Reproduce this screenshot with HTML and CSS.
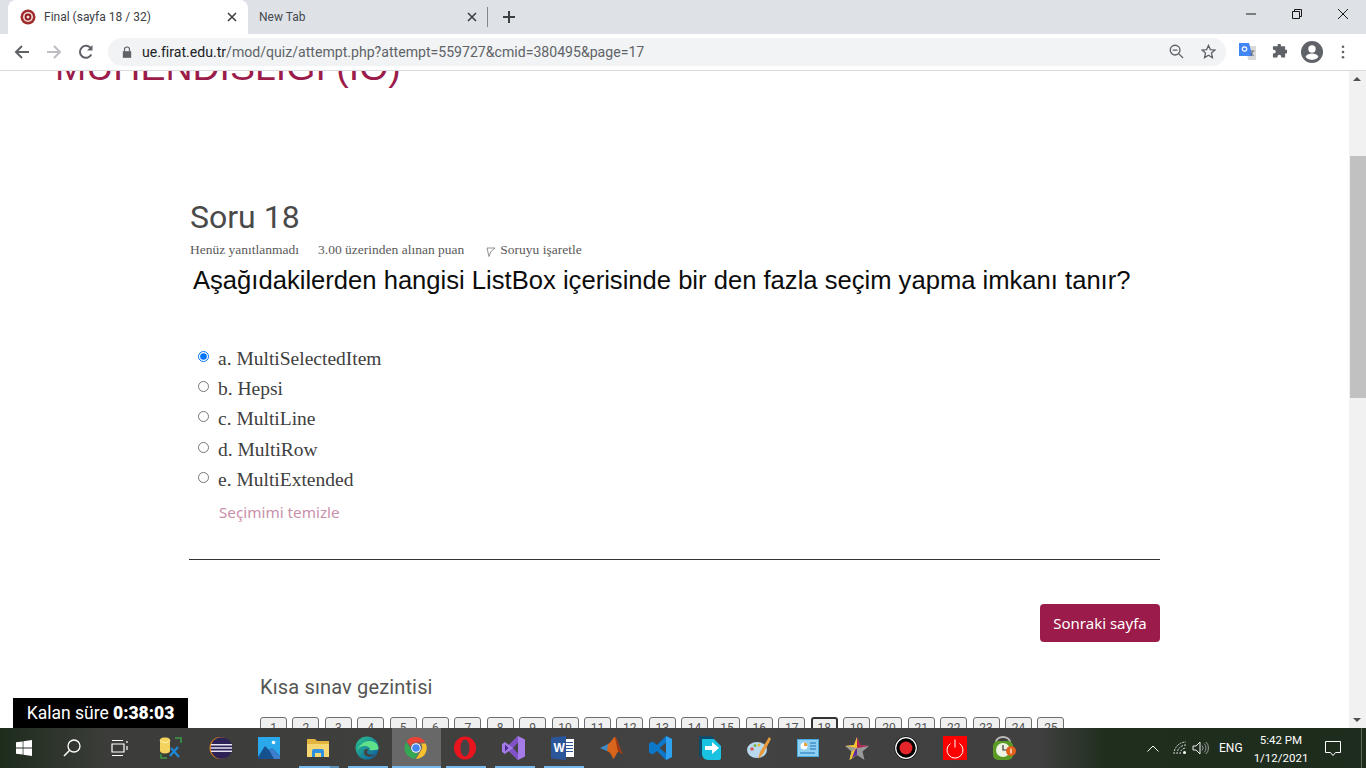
FILE: index.html
```html
<!DOCTYPE html>
<html lang="tr">
<head>
<meta charset="utf-8">
<title>Final (sayfa 18 / 32)</title>
<link rel="stylesheet" href="styles.css">
</head>
<body>
<header class="chrome">
  <div class="tabstrip">
    <div class="tab tab-active">
      <svg class="favicon" viewBox="0 0 16 16"><circle cx="8" cy="8" r="7.500" fill="#a02c2c"/><circle cx="8" cy="8" r="5" fill="#f3dcdc"/><circle cx="8" cy="8" r="3.400" fill="#8e1d1d"/><circle cx="8" cy="8" r="1.500" fill="#f3dcdc"/></svg>
      <span class="tab-title">Final (sayfa 18 / 32)</span>
      <svg class="tab-close" viewBox="0 0 10 10"><path d="M1 1l8 8M9 1l-8 8"/></svg>
    </div>
    <div class="tab tab-idle">
      <span class="tab-title">New Tab</span>
      <svg class="tab-close" viewBox="0 0 10 10"><path d="M1 1l8 8M9 1l-8 8"/></svg>
    </div>
    <span class="tab-sep"></span>
    <svg class="new-tab" viewBox="0 0 12 12"><path d="M6 0v12M0 6h12"/></svg>
    <div class="win-controls">
      <svg viewBox="0 0 10 10" class="win-min"><path d="M0 5h10"/></svg>
      <svg viewBox="0 0 10 10" class="win-max"><path d="M.5 2.500h7v7h-7zM2.500 2.500V.5h7v7h-2"/></svg>
      <svg viewBox="0 0 10 10" class="win-close"><path d="M0 0l10 10M10 0L0 10"/></svg>
    </div>
  </div>
  <div class="toolbar">
    <svg class="nav-icon" viewBox="0 0 16 16"><path class="ico-line" d="M15 8H2M8 2L2 8l6 6"/></svg>
    <svg class="nav-icon nav-fwd" viewBox="0 0 16 16"><path class="ico-line ico-dim" d="M1 8h13M8 2l6 6-6 6"/></svg>
    <svg class="nav-icon nav-reload" viewBox="0 0 16 16"><path class="ico-line" d="M13.300 10.500A6 6 0 1 1 13 4.600"/><path class="ico-fill" d="M14.500 1v5.500H9z"/></svg>
    <div class="omnibox">
      <svg class="lock" viewBox="0 0 12 14"><path class="ico-fill" d="M1 6h10v8H1z"/><path class="ico-line-thin" d="M3 6V4a3 3 0 0 1 6 0v2"/></svg>
      <span class="url"><span class="url-host">ue.firat.edu.tr</span>/mod/quiz/attempt.php?attempt=559727&amp;cmid=380495&amp;page=17</span>
      <svg class="omni-icon" viewBox="0 0 16 16"><circle class="ico-line-thin" cx="6.500" cy="6.500" r="5.200"/><path class="ico-line-thin" d="M4 6.500h5M10.500 10.500l4.500 4.500"/></svg>
      <svg class="omni-icon omni-star" viewBox="0 0 16 16"><path class="ico-line-thin" d="M8 1.500l2 4.500 4.800.5-3.600 3.200 1 4.800L8 12l-4.200 2.500 1-4.800L1.200 6.500 6 6z"/></svg>
    </div>
    <svg class="ext-translate" viewBox="0 0 17 17"><path fill="#dadada" d="M7 3h10v14H9z"/><path fill="#4285f4" d="M0 0h10l3.500 13H0z"/><circle cx="5.500" cy="6" r="2.200" fill="none" stroke="#fff" stroke-width="1.200"/><path d="M11.500 8h4M13.500 8c0 2-1 4-2 5M12 9.500c.5 1.500 2 3 3 3.500" fill="none" stroke="#666" stroke-width=".9"/></svg>
    <svg class="ext-puzzle" viewBox="0 0 16 16"><path class="ico-fill" d="M6 1a1.800 1.800 0 0 1 3.500 0v1.500H14V6h1a2 2 0 0 1 0 4h-1v4.500H9.800v-1a2 2 0 0 0-4 0v1H1V10h1a2 2 0 0 0 0-4H1V2.500h5z"/></svg>
    <svg class="avatar" viewBox="0 0 22 22"><circle cx="11" cy="11" r="11" fill="#5f6368"/><circle cx="11" cy="8" r="3.700" fill="#fff"/><path fill="#fff" d="M4.500 16c1-2.700 4-3.500 6.500-3.500s5.500.8 6.500 3.500a8.500 8.500 0 0 1-13 0z"/></svg>
    <svg class="kebab" viewBox="0 0 4 16"><circle cx="2" cy="2" r="1.500"/><circle cx="2" cy="8" r="1.500"/><circle cx="2" cy="14" r="1.500"/></svg>
  </div>
</header>

<main class="viewport">
  <div class="page">
    <div class="page-inner">
      <h1 class="course">MÜHENDİSLİĞİ (İÖ)</h1>
      <section class="question">
        <h2 class="q-number">Soru 18</h2>
        <div class="q-meta">
          <span>Henüz yanıtlanmadı</span>
          <span>3.00 üzerinden alınan puan</span>
          <span class="q-flag"><svg viewBox="0 0 10 10"><path d="M1 1h8L5 4.500 3 9.500z" fill="#fff" stroke="#777" stroke-width=".8"/></svg>Soruyu işaretle</span>
        </div>
        <p class="q-text">Aşağıdakilerden hangisi ListBox içerisinde bir den fazla seçim yapma imkanı tanır?</p>
        <div class="answers">
          <label class="answer"><input type="radio" name="q" checked><span>a. MultiSelectedItem</span></label>
          <label class="answer"><input type="radio" name="q"><span>b. Hepsi</span></label>
          <label class="answer"><input type="radio" name="q"><span>c. MultiLine</span></label>
          <label class="answer"><input type="radio" name="q"><span>d. MultiRow</span></label>
          <label class="answer"><input type="radio" name="q"><span>e. MultiExtended</span></label>
        </div>
        <a class="clear-choice">Seçimimi temizle</a>
        <hr class="rule">
        <div class="actions"><button class="next-btn">Sonraki sayfa</button></div>
      </section>
      <section class="quiz-nav">
        <h3 class="nav-title">Kısa sınav gezintisi</h3>
        <div class="nav-grid">
          <span class="qn">1</span><span class="qn">2</span><span class="qn">3</span><span class="qn">4</span><span class="qn">5</span><span class="qn">6</span><span class="qn">7</span><span class="qn">8</span><span class="qn">9</span><span class="qn">10</span><span class="qn">11</span><span class="qn">12</span><span class="qn">13</span><span class="qn">14</span><span class="qn">15</span><span class="qn">16</span><span class="qn">17</span><span class="qn qn-current">18</span><span class="qn">19</span><span class="qn">20</span><span class="qn">21</span><span class="qn">22</span><span class="qn">23</span><span class="qn">24</span><span class="qn">25</span>
        </div>
      </section>
    </div>
    <div class="timer">Kalan süre <b>0:38:03</b></div>
  </div>
  <div class="scrollbar">
    <span class="sb-arrow sb-up"></span>
    <span class="sb-thumb"></span>
    <span class="sb-arrow sb-down"></span>
  </div>
</main>

<footer class="taskbar">
  <div class="task-slot sys"><svg class="ti-win" viewBox="0 0 16 16"><path fill="#fff" d="M0 2.300l6.700-.9v6.200H0zM7.400 1.300L16 0v7.600H7.400zM0 8.400h6.700v6.200L0 13.700zM7.400 8.400H16V16l-8.600-1.200z"/></svg></div>
  <div class="task-slot sys"><svg class="ti-20" viewBox="0 0 20 20"><circle cx="12" cy="8" r="6" fill="none" stroke="#fff" stroke-width="1.300"/><path d="M7.700 12.300L2 18" stroke="#fff" stroke-width="1.500"/></svg></div>
  <div class="task-slot sys sys-last"><svg class="ti-20" viewBox="0 0 20 20"><path d="M2 2.500h11M2 17.500h11M2 6h12v8H2zM17 3v2M17 8v4" fill="none" stroke="#fff" stroke-width="1.200"/></svg></div>
  <div class="task-slot"><svg class="ti-24" viewBox="0 0 24 24"><path d="M6 1.500C2 1.500 1 3 1 4v11c0 1 2 2.500 5 2.500s5-1.500 5-2.500V4c0-1-1-2.500-5-2.500z" fill="#f4d35e"/><path d="M1 4c0 1 2 2.500 5 2.500S11 5 11 4" fill="none" stroke="#fff3b0"/><path d="M16 2h6v5M2 18v4h6" fill="none" stroke="#3b9b45" stroke-width="1.500"/><path d="M11 20l8-9M12 12l8 9" stroke="#1e88d8" stroke-width="2.200"/></svg></div>
  <div class="task-slot"><svg class="ti-24" viewBox="0 0 24 24"><circle cx="12.500" cy="12" r="11" fill="#e8861e"/><circle cx="13.500" cy="12" r="10.800" fill="#2c2255"/><path d="M3 8.800h21M2.700 12h21.600M3 15.200h21" stroke="#e8e4f5" stroke-width="1.500"/></svg></div>
  <div class="task-slot"><svg class="ti-22" viewBox="0 0 22 22"><rect width="22" height="22" fill="#29a9ec"/><circle cx="15.500" cy="5.500" r="1.800" fill="#fff"/><path d="M0 20l7-11 4 4 3-2 8 8v3H0z" fill="#15508f"/><path d="M11 13l3-2 8 8v3h-6z" fill="#3c7ecb"/></svg></div>
  <div class="task-slot running running-multi"><svg class="ti-22" viewBox="0 0 22 22"><path d="M0 2h8l2 2h12v16H0z" fill="#e3b53e"/><path d="M0 7h22v13H0z" fill="#f7d774"/><path d="M5 20v-6a2 2 0 0 1 2-2h8a2 2 0 0 1 2 2v6h-3v-4H8v4z" fill="#2f8fe0"/></svg></div>
  <div class="task-slot running"><svg class="ti-24" viewBox="0 0 24 24"><defs><linearGradient id="eg" x1="0" y1="0" x2="1" y2="1"><stop offset="0" stop-color="#2bc48a"/><stop offset="1" stop-color="#0c59a4"/></linearGradient></defs><circle cx="12" cy="12" r="11.500" fill="url(#eg)"/><path d="M23.500 13c0-6-5-8-9-8-6 0-11 5-13 10 0 0 3-6 9-5 4 .7 5 3 4 4 6 1 9-1 9-1z" fill="#5fe08a"/><path d="M12 13c-3 0-4 3-2 6 1.500 2 6 3 11-1-4 1.500-9 .5-9-2 0-1 1-2 2-2z" fill="#444"/></svg></div>
  <div class="task-slot running task-active"><svg class="ti-24" viewBox="0 0 24 24"><path d="M12 1a11 11 0 0 1 9.500 5.500H12a5.500 5.500 0 0 0-5.300 4L2.800 5A11 11 0 0 1 12 1z" fill="#ea4335"/><path d="M21.800 7.500A11 11 0 0 1 12 23l4.700-8a5.500 5.500 0 0 0 .2-7.500z" fill="#fbc02d"/><path d="M2.200 6a11 11 0 0 0 8.600 16.900l3.900-6.500a5.500 5.500 0 0 1-7.400-2.300z" fill="#34a853"/><circle cx="12" cy="12" r="4.800" fill="#fff"/><circle cx="12" cy="12" r="3.800" fill="#4285f4"/></svg></div>
  <div class="task-slot running"><svg class="ti-24" viewBox="0 0 24 24"><ellipse cx="12" cy="12" rx="11" ry="11.500" fill="#e8151f"/><ellipse cx="12" cy="12" rx="4.500" ry="8.500" fill="#444"/></svg></div>
  <div class="task-slot running"><svg class="ti-24" viewBox="0 0 24 24"><path d="M16 0l7 3.500v17L16 24l-9-9-4 3-3-2V8l3-2 4 3z" fill="#a57be8"/><path d="M16 0v24l-9-9 4-3-4-3z" fill="#8052c9"/><path d="M3 8.500v7l3.500-3.500z" fill="#4a2a8f"/><path d="M16 6.500L11 12l5 5.500z" fill="#444"/></svg></div>
  <div class="task-slot running"><svg class="ti-24" viewBox="0 0 24 24"><path d="M14 3h9v18h-9z" fill="#fff"/><path d="M15 6.500h7M15 9.500h7M15 12.500h7M15 15.500h7" stroke="#2b579a" stroke-width="1.200"/><path d="M0 1.500L15 0v24L0 22.500z" fill="#2b579a"/><text x="2.500" y="16" class="word-w">W</text></svg></div>
  <div class="task-slot"><svg class="ti-24" viewBox="0 0 24 24"><path d="M0 12l8-4 3 4-4 3z" fill="#3f8dc8"/><path d="M8 8c3-1 5-7 7-7 2 0 5 14 8 17-3-1-4-3-5-2-2 2-3 6-5 7-1-4-3-7-6-8z" fill="#d9641c"/><path d="M15 1c2 0 5 14 8 17-3-1-4-3-5-2z" fill="#a03613"/></svg></div>
  <div class="task-slot"><svg class="ti-24" viewBox="0 0 24 24"><path d="M17 0l6 3v18l-6 3-9-9-4.500 3.500L0 16.500V7.500L3.500 5.500 8 9z" fill="#0b78c9"/><path d="M17 0l6 3v18l-6 3z" fill="#2ea1ef"/><path d="M17 6.500L10.500 12l6.500 5.500z" fill="#444"/></svg></div>
  <div class="task-slot"><svg class="ti-24" viewBox="0 0 24 24"><path d="M1 0h13l2 3H4v18H1z" fill="#124a6b"/><path d="M4 3h12l7 7v12a2 2 0 0 1-2 2H10a6 6 0 0 1-6-6z" fill="#19c2e0"/><path d="M7 10h7V6l7 6-7 6v-4H7z" fill="#fff"/></svg></div>
  <div class="task-slot"><svg class="ti-24" viewBox="0 0 24 24"><ellipse cx="10" cy="14" rx="10" ry="8" fill="#b8d8ee"/><circle cx="5" cy="13" r="1.700" fill="#d9534f"/><circle cx="8" cy="9.500" r="1.500" fill="#7ab648"/><circle cx="12" cy="9" r="1.500" fill="#e8b83a"/><path d="M22 1l-9 15-2 7 5-5 8-15z" fill="#e89a3c"/></svg></div>
  <div class="task-slot"><svg class="ti-22" viewBox="0 0 22 18"><rect width="22" height="18" fill="#4aa9e0"/><rect x="1" y="1" width="20" height="16" fill="#8fd0f2"/><circle cx="7" cy="7" r="3.500" fill="#fff"/><path d="M7 7V3.500A3.500 3.500 0 0 1 10.500 7z" fill="#e8a33a"/><path d="M13 4h6M13 7h6M13 10h6M3 14h15" stroke="#1b6fb3" stroke-width="1.200"/></svg></div>
  <div class="task-slot"><svg class="ti-24" viewBox="0 0 24 24"><path d="M12 1l3 8 9 1-6.500 5.500 2 8.500-7.500-5-7.500 5 2-8.500L0 10l9-1z" fill="#999"/><path d="M12 1v11L0 10l9-1z" fill="#f4c430"/><path d="M12 1l3 8 9 1-12 2z" fill="#b5234d"/><path d="M12 12v7l-7.500 5 2-8.500z" fill="#f4c430"/><path d="M12 12v7l-5 3 3-8z" fill="#5b2ea0"/></svg></div>
  <div class="task-slot"><svg class="ti-24" viewBox="0 0 24 24"><circle cx="12" cy="12" r="11.500" fill="#000"/><circle cx="12" cy="12" r="10.300" fill="none" stroke="#fff" stroke-width="1.200"/><circle cx="12" cy="12" r="6.500" fill="#e5252a"/></svg></div>
  <div class="task-slot"><svg class="ti-24" viewBox="0 0 24 24"><rect width="24" height="24" fill="#fe0000"/><path d="M7.500 7.500a8 8 0 1 0 9 0M12 3.500v8" fill="none" stroke="#fff" stroke-width="1"/></svg></div>
  <div class="task-slot"><svg class="ti-24" viewBox="0 0 24 24"><path d="M4 6a7 5 0 0 1 14 0" fill="none" stroke="#bbb" stroke-width="2"/><rect x="1" y="5" width="20" height="19" rx="5" fill="#5a9a25"/><circle cx="11" cy="14" r="7" fill="#eef4e4"/><path d="M11 9v5h4" fill="none" stroke="#333" stroke-width="1.200"/><circle cx="19" cy="15" r="5" fill="#e2601c"/><path d="M19 12.500v5" stroke="#fff" stroke-width="1.200"/></svg></div>
  <div class="tray">
    <svg class="tray-chev" viewBox="0 0 12 7"><path d="M.5 6.500L6 1l5.500 5.500"/></svg>
    <svg class="tray-wifi" viewBox="0 0 14 14"><path d="M1 13A12 12 0 0 1 13 1M4 13a9 9 0 0 1 9-9M7 13a6 6 0 0 1 6-6" fill="none" stroke="#ddd" stroke-width="1" stroke-dasharray="2 1"/><circle cx="11.500" cy="11.500" r="1.500" fill="#fff"/></svg>
    <svg class="tray-vol" viewBox="0 0 17 14"><path d="M1 5h3l4-4v12l-4-4H1z" fill="none" stroke="#eee"/><path d="M10 4.500a3.500 3.500 0 0 1 0 5M12 2.500a6 6 0 0 1 0 9M14 1a8.500 8.500 0 0 1 0 12" fill="none" stroke="#999"/></svg>
    <span class="tray-lang">ENG</span>
    <div class="tray-clock"><span>5:42 PM</span><span>1/12/2021</span></div>
    <svg class="tray-note" viewBox="0 0 16 15"><path d="M.5.500h15v11h-5L8 14.500l-2.500-3h-5z"/></svg>
    <span class="show-desktop"></span>
  </div>
</footer>
</body>
</html>
```
FILE: styles.css
```css
* { box-sizing: border-box; }
html, body { margin: 0; height: 100%; }
body {
  width: 1366px; height: 768px; overflow: hidden;
  display: flex; flex-direction: column;
  font-family: "Roboto", sans-serif; background: #fff;
}
/* browser chrome */
.chrome { flex: 0 0 71px; }
.tabstrip {
  height: 34px; background: #dee1e6; display: flex; align-items: flex-end;
  padding-left: 8px;
}
.tab {
  width: 240px; height: 34px; display: flex; align-items: center;
  font: 12px "Roboto", sans-serif; color: #3c4043;
}
.tab-active { background: #fff; border-radius: 8px 8px 0 0; padding: 0 11px 0 12px; }
.tab-idle { width: 239px; padding: 0 10px 0 11px; color: #45494e; }
.favicon { width: 16px; height: 16px; flex: none; margin-right: 8px; }
.tab-title { flex: 1; white-space: nowrap; }
.tab-close { width: 10px; height: 10px; flex: none; }
.tab-close path { stroke: #3c4043; stroke-width: 1.600; fill: none; }
.tab-sep { width: 1px; height: 20px; background: #80868b; margin: 0 0 7px 0; }
.new-tab { width: 12px; height: 12px; margin: 0 0 11px 15px; }
.new-tab path { stroke: #3c4043; stroke-width: 2; fill: none; }
.win-controls { margin-left: auto; height: 34px; display: flex; align-items: center; gap: 36px; padding: 0 18px 6px 0; }
.win-controls svg { width: 10px; height: 10px; }
.win-controls path { stroke: #1a1a1a; stroke-width: 1; fill: none; }
.toolbar {
  height: 37px; background: #fff; border-bottom: 1px solid #d8dadd;
  display: flex; align-items: center; padding: 0 0 1px 14px;
}
.nav-icon { width: 16px; height: 16px; flex: none; margin-right: 16px; }
.nav-reload { margin-right: 14px; }
.ico-line { stroke: #5f6368; stroke-width: 2; fill: none; }
.ico-line-thin { stroke: #5f6368; stroke-width: 1.400; fill: none; }
.ico-dim { stroke: #bcbec1; }
.ico-fill { fill: #5f6368; }
.omnibox {
  width: 1118px; height: 28px; border-radius: 14px; background: #f1f3f4;
  display: flex; align-items: center; padding: 0 10px 0 14px;
}
.lock { width: 10px; height: 12px; flex: none; margin-right: 10px; }
.url { flex: 1; font: 14.100px "Roboto", sans-serif; color: #5f6368; white-space: nowrap; }
.url-host { color: #202124; }
.omni-icon { width: 15px; height: 15px; flex: none; margin-left: 17px; }
.ext-translate { width: 17px; height: 17px; flex: none; margin-left: 13px; }
.ext-puzzle { width: 15px; height: 15px; flex: none; margin-left: 16px; }
.avatar { width: 22px; height: 22px; flex: none; margin-left: 14px; }
.kebab { width: 4px; height: 14px; flex: none; margin-left: 18px; fill: #5f6368; }

/* page */
.viewport { flex: 1; min-height: 0; display: flex; }
.page { flex: 1; position: relative; overflow: hidden; }
.page-inner { margin-top: -24px; }
.course {
  margin: 0; padding-left: 55px; height: 40px;
  font: 400 37.500px/40px "Liberation Sans", sans-serif; color: #9b1c4a; white-space: nowrap;
}
.question { margin: 112px 189px 0 189px; }
.q-number { margin: 0; font: 400 32px/36px "Roboto", sans-serif; color: #4a4a4a; padding-left: 1px; }
.q-meta {
  display: flex; gap: 19px; margin-top: 7px; padding-left: 1px;
  font: 13.500px/16px "Liberation Serif", serif; color: #5a5a5a;
}
.q-flag { display: flex; align-items: center; gap: 4px; margin-left: 3px; }
.q-flag svg { width: 10px; height: 10px; margin-top: 3px; }
.q-text {
  margin: 7px 0 0 4px; font: 25.600px/30px "Liberation Sans", sans-serif; color: #0c0c0c; white-space: nowrap;
}
.answers { margin: 49px 0 0 9px; display: flex; flex-direction: column; }
.answer {
  height: 30.200px; display: flex; align-items: flex-start; gap: 9px;
  font: 19.500px/30px "Liberation Serif", serif; color: #404040;
}
.answer input { width: 11px; height: 11px; margin: 7px 0 0 0; accent-color: #0075ff; flex: none; }
.clear-choice {
  display: block; margin: 5px 0 0 30px; font: 15.250px/24px "Noto Sans", sans-serif; color: #c98fab;
}
.rule { margin: 35px 0 0 0; border: 0; border-top: 1px solid #333; }
.actions { display: flex; justify-content: flex-end; margin-top: 44px; }
.next-btn {
  width: 120px; height: 38px; border: 0; border-radius: 4px; background: #9b1c4a; color: #fff;
  font: 15px "Noto Sans", sans-serif; padding: 0;
}
.quiz-nav { margin: 32px 0 0 260px; }
.nav-title { margin: 0; font: 400 20px/26px "Roboto", sans-serif; color: #555; letter-spacing: .15px; }
.nav-grid { display: flex; gap: 5.400px; margin-top: 17px; }
.qn {
  width: 27px; height: 28px; flex: none; border: 1px solid #6e6e6e; border-radius: 3px;
  background: #f0f0f0; font: 12px/20px "Roboto", sans-serif; color: #555; text-align: center;
}
.qn-current { border: 2px solid #333; line-height: 18px; }
.timer {
  position: absolute; left: 13px; bottom: 0; width: 175px; height: 30px;
  background: #000; color: #fff; font: 17.500px/30px "Roboto", sans-serif; text-align: center;
}
.timer b { font-weight: 900; }
.scrollbar {
  flex: 0 0 17px; position: relative; background: #f1f1f1;
}
.sb-thumb { position: absolute; left: 1px; right: 0; top: 85px; height: 242px; background: #c1c1c1; }
.sb-arrow { position: absolute; left: 4px; border-left: 4px solid transparent; border-right: 4px solid transparent; }
.sb-up { top: 6px; border-bottom: 4px solid #505050; }
.sb-down { bottom: 6px; border-top: 4px solid #505050; }

/* taskbar */
.taskbar {
  flex: 0 0 40px; display: flex; align-items: stretch;
  background: linear-gradient(90deg, #1d2c1c 0, #2a3328 3%, #3c3d3a 8%, #424242 50%, #404040 76%, #1f2e1d 81%, #1d2c1c 100%);
}
.task-slot { width: 49px; flex: none; display: flex; align-items: center; justify-content: center; padding-right: 2px; }
.sys { width: 48px; padding-right: 0; }
.sys-last { width: 51px; padding-right: 3px; }
.running { background: linear-gradient(#76b9ed, #76b9ed) center bottom / 40px 2px no-repeat; }
.running-multi { background: linear-gradient(90deg, #76b9ed 31px, #5a8fb8 31px) center bottom / 40px 2px no-repeat; }
.task-active { background: linear-gradient(#76b9ed, #76b9ed) center bottom / 100% 2px no-repeat, #686868; }
.ti-win { width: 16px; height: 16px; }
.ti-20 { width: 20px; height: 20px; }
.ti-22 { width: 22px; height: 22px; }
.ti-24 { width: 24px; height: 24px; }
.word-w { font: 700 12px "Liberation Sans", sans-serif; fill: #fff; }
.tray { flex: 1; display: flex; align-items: center; color: #fff; padding-left: 118px; }
.tray-chev { width: 12px; height: 7px; fill: none; stroke: #fff; stroke-width: 1; }
.tray-wifi { width: 14px; height: 14px; margin-left: 14px; }
.tray-vol { width: 17px; height: 14px; margin-left: 5px; }
.tray-lang { margin-left: 10px; font: 12px "Roboto", sans-serif; width: 24px; }
.tray-clock {
  margin-left: 9px; padding-top: 1px; display: flex; flex-direction: column; align-items: center;
  font: 11.500px/18px "Roboto", sans-serif; width: 58px;
}
.tray-note { width: 16px; height: 15px; margin-left: 15px; fill: none; stroke: #fff; stroke-width: 1; }
.show-desktop { width: 1px; height: 40px; background: #5a6a58; margin-left: 20px; }
```
